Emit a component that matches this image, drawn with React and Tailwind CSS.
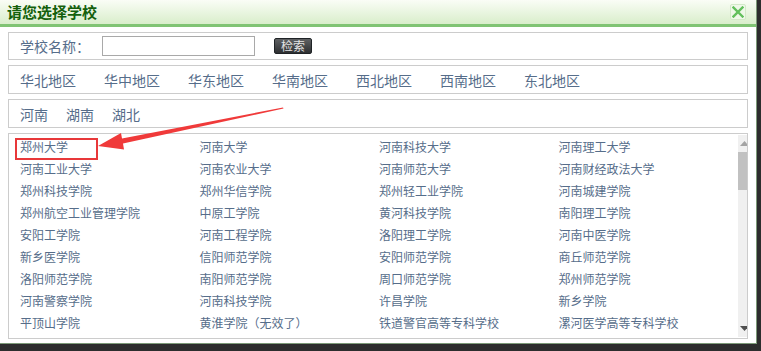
import React from 'react'

const regions = ['华北地区', '华中地区', '华东地区', '华南地区', '西北地区', '西南地区', '东北地区']
const provinces = ['河南', '湖南', '湖北']
const schools = [
  '郑州大学', '河南大学', '河南科技大学', '河南理工大学',
  '河南工业大学', '河南农业大学', '河南师范大学', '河南财经政法大学',
  '郑州科技学院', '郑州华信学院', '郑州轻工业学院', '河南城建学院',
  '郑州航空工业管理学院', '中原工学院', '黄河科技学院', '南阳理工学院',
  '安阳工学院', '河南工程学院', '洛阳理工学院', '河南中医学院',
  '新乡医学院', '信阳师范学院', '安阳师范学院', '商丘师范学院',
  '洛阳师范学院', '南阳师范学院', '周口师范学院', '郑州师范学院',
  '河南警察学院', '河南科技学院', '许昌学院', '新乡学院',
  '平顶山学院', '黄淮学院（无效了）', '铁道警官高等专科学校', '漯河医学高等专科学校',
]

const font = { fontFamily: '"Noto Sans CJK SC", "Liberation Sans", sans-serif' }

export default function App() {
  return (
    <div className="w-[761px] h-[351px] bg-[#2d2d2d] overflow-hidden" style={font}>
      <div className="relative w-[757px] h-[344px] bg-white border-r border-b border-[#7c9a78] flex flex-col">
        {/* Title bar */}
        <div className="h-[27px] shrink-0 flex items-start justify-between bg-gradient-to-b from-[#fafdf6] to-[#d9eecb] border-b-[3px] border-[#80c474]">
          <span className="pl-[7px] pt-[2px] text-[15px] leading-[20px] font-bold text-[#14600c]">请您选择学校</span>
          <button className="mt-[4px] mr-[10px] w-[16px] h-[16px] flex items-center justify-center border border-[#d3e9c9] bg-[#eef8e8] rounded-[2px]">
            <svg width="12" height="12" viewBox="0 0 12 12">
              <path d="M1.5 1.5 L10.5 10.5 M10.5 1.5 L1.5 10.5" stroke="#62bf5c" strokeWidth="2.4" strokeLinecap="square" />
            </svg>
          </button>
        </div>

        <div className="flex flex-col gap-[5px] px-[8px] pt-[5px] text-[#566d8a]">
          {/* Search */}
          <div className="h-[28px] border border-[#cccccc] flex items-center pl-[11px]">
            <span className="text-[14px] leading-none">学校名称：</span>
            <input className="ml-[12px] w-[153px] h-[20px] border border-[#a9a9a9] outline-none" />
            <button className="ml-[19px] w-[38px] h-[16px] rounded-[2px] border border-[#1f2326] bg-gradient-to-b from-[#5f6163] to-[#2e3032] text-[12px] leading-none text-[#e4e4e4] flex items-center justify-center">检索</button>
          </div>

          {/* Regions */}
          <div className="h-[29px] border border-[#cccccc] flex items-center gap-[28px] pl-[11px] text-[14px] leading-none">
            {regions.map(r => <span key={r}>{r}</span>)}
          </div>

          {/* Provinces */}
          <div className="h-[29px] border border-[#cccccc] flex items-center gap-[18px] pl-[11px] text-[14px] leading-none">
            {provinces.map(p => <span key={p}>{p}</span>)}
          </div>

          {/* School list */}
          <div className="relative h-[206px] border border-[#cccccc] flex overflow-hidden">
            <div className="flex-1 grid grid-cols-[repeat(4,179.5px)] auto-rows-[22px] pl-[11px] pt-[2px] text-[12px] leading-[22px]">
              {schools.map(s => <span key={s} className="whitespace-nowrap">{s}</span>)}
            </div>
            <div className="w-[17px] my-[1px] mr-[1px] bg-[#f0f0f0] flex flex-col items-center">
              <div className="h-[17px] flex items-center justify-center">
                <svg width="9" height="5" viewBox="0 0 9 5"><path d="M4.5 0 L9 5 L0 5 Z" fill="#a3a3a3" /></svg>
              </div>
              <div className="w-[13px] h-[38px] bg-[#c1c1c1]" />
              <div className="flex-1" />
              <div className="h-[17px] flex items-center justify-center">
                <svg width="9" height="5" viewBox="0 0 9 5"><path d="M0 0 L9 0 L4.5 5 Z" fill="#505050" /></svg>
              </div>
            </div>
          </div>
        </div>

        {/* Annotation: red box and arrow */}
        <div className="absolute left-[15px] top-[138px] w-[83px] h-[22px] border-2 border-[#e8383a]" />
        <svg className="absolute left-0 top-0 pointer-events-none" width="300" height="160" viewBox="0 0 300 160">
          <polygon points="98,146 121,133 122,138.5 283,107.5 283.5,108.5 123,143.5 124,149.5" fill="#f03a3a" />
        </svg>
      </div>
    </div>
  )
}
